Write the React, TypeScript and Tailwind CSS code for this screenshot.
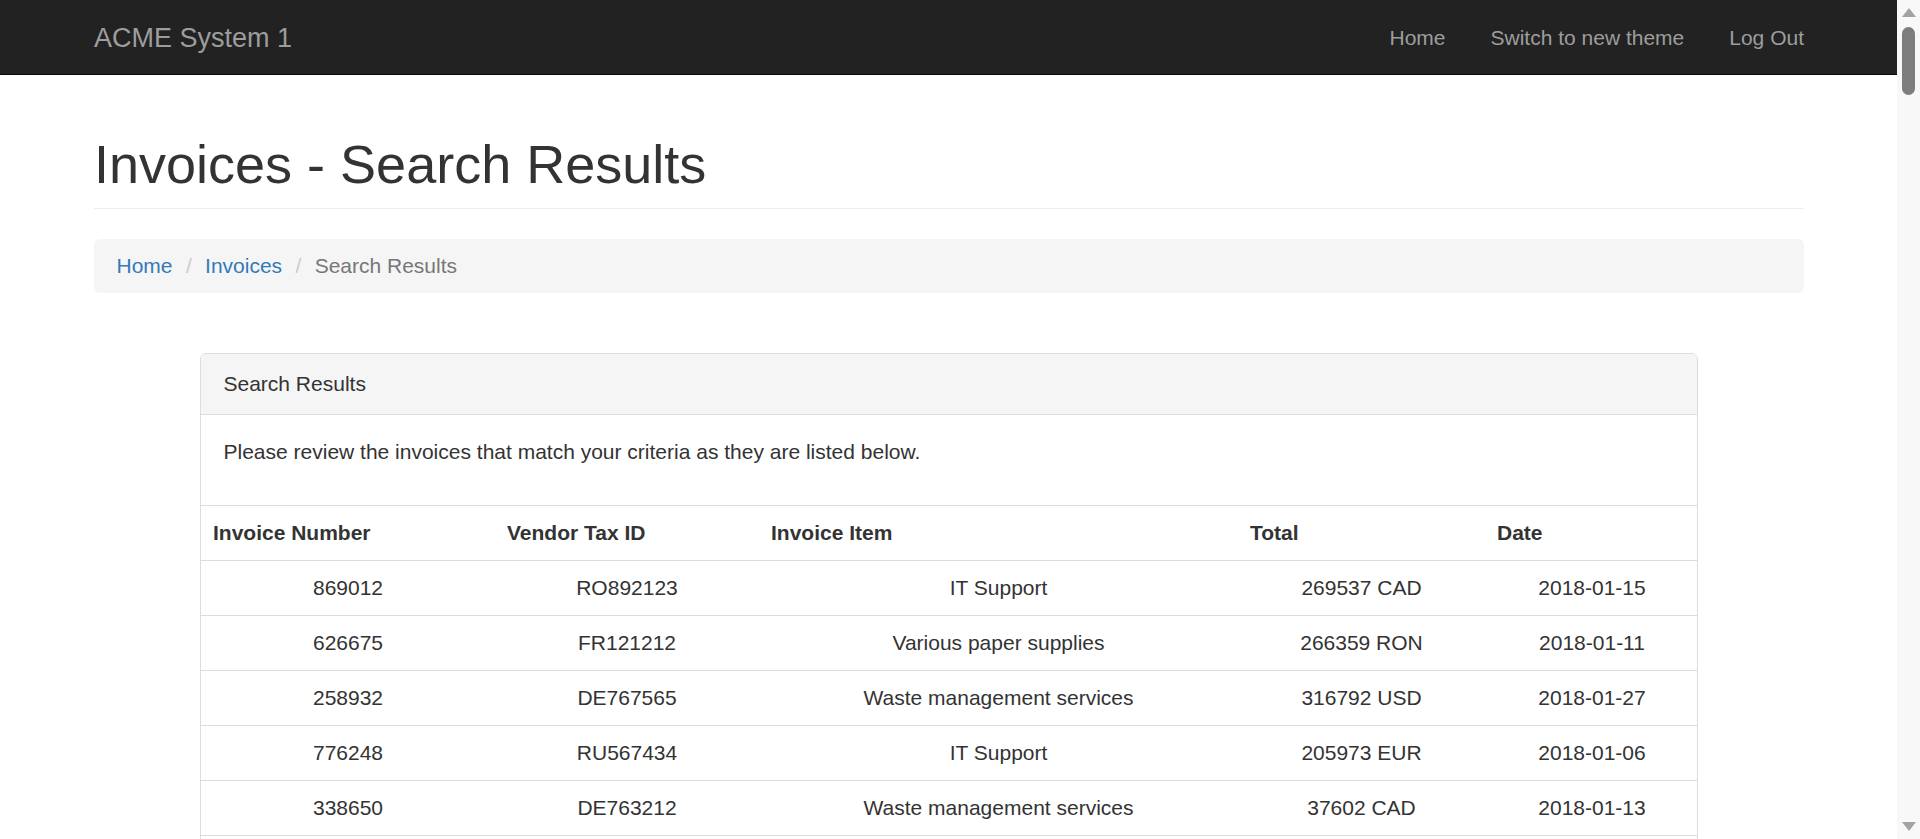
import React from 'react'

type Invoice = {
    number: string
    vendor: string
    item: string
    total: string
    date: string
}

const firstRows: Invoice[] = [
    { number: '869012', vendor: 'RO892123', item: 'IT Support', total: '269537 CAD', date: '2018-01-15' },
    { number: '626675', vendor: 'FR121212', item: 'Various paper supplies', total: '266359 RON', date: '2018-01-11' },
    { number: '258932', vendor: 'DE767565', item: 'Waste management services', total: '316792 USD', date: '2018-01-27' },
    { number: '776248', vendor: 'RU567434', item: 'IT Support', total: '205973 EUR', date: '2018-01-06' },
    { number: '338650', vendor: 'DE763212', item: 'Waste management services', total: '37602 CAD', date: '2018-01-13' },
]

const vendors = ['RO892123', 'FR121212', 'DE767565', 'RU567434', 'DE763212']
const items = ['IT Support', 'Various paper supplies', 'Waste management services']
const currencies = ['CAD', 'RON', 'USD', 'EUR']

// fills the rest of the long result list with stable, made-up invoices
function buildRows(count: number): Invoice[] {
    let seed = 12345
    const rand = () => {
        seed = (seed * 1103515245 + 12345) % 2147483648
        return seed / 2147483648
    }
    const rows = [...firstRows]
    while (rows.length < count) {
        const day = String(1 + Math.floor(rand() * 28)).padStart(2, '0')
        rows.push({
            number: String(100000 + Math.floor(rand() * 899999)),
            vendor: vendors[Math.floor(rand() * vendors.length)],
            item: items[Math.floor(rand() * items.length)],
            total: `${10000 + Math.floor(rand() * 320000)} ${currencies[Math.floor(rand() * currencies.length)]}`,
            date: `2018-01-${day}`,
        })
    }
    return rows
}

const rows = buildRows(164)

const columns = [
    { label: 'Invoice Number', width: 'w-[294px]' },
    { label: 'Vendor Tax ID', width: 'w-[264px]' },
    { label: 'Invoice Item', width: 'w-[479px]' },
    { label: 'Total', width: 'w-[247px]' },
    { label: 'Date', width: 'w-[214px]' },
]

// the window's scrollbar as it shows in the screenshot
function ScrollBar(): JSX.Element {
    return (
        <div className="fixed top-0 right-0 w-[23px] h-screen bg-[#f8f8f8] flex flex-col items-center">
            <svg width="14" height="9" viewBox="0 0 14 9" className="mt-[8px]">
                <polygon points="7,0 14,9 0,9" fill="#a3a3a3" />
            </svg>
            <div className="mt-[10px] w-[13px] h-[68px] rounded-full bg-[#7d7d7d]" />
            <div className="flex-1" />
            <svg width="14" height="9" viewBox="0 0 14 9" className="mb-[8px]">
                <polygon points="0,0 14,0 7,9" fill="#a3a3a3" />
            </svg>
        </div>
    )
}

export default function App(): JSX.Element {
    return (
        <div className="min-h-screen bg-white text-[#333] font-['Liberation_Sans',Arial,sans-serif] text-[21px] leading-[30px]">
            <div className="mr-[23px]">
                <nav className="h-[75px] bg-[#222] border-b border-[#080808]">
                    <div className="ml-[94px] w-[1710px] h-full pt-[2px] flex items-center justify-between">
                        <a href="#" className="text-[27px] leading-[30px] text-[#9d9d9d]">
                            ACME System 1
                        </a>
                        <ul className="flex -mr-[22.5px]">
                            <li><a href="#" className="px-[22.5px] text-[#9d9d9d]">Home</a></li>
                            <li><a href="#" className="px-[22.5px] text-[#9d9d9d]">Switch to new theme</a></li>
                            <li><a href="#" className="px-[22.5px] text-[#9d9d9d]">Log Out</a></li>
                        </ul>
                    </div>
                </nav>

                <div className="ml-[94px] w-[1710px] pb-[30px]">
                    <h1 className="mt-[60px] text-[54px] leading-[59.4px] font-medium pb-[13.5px] border-b border-[#eee]">
                        Invoices - Search Results
                    </h1>

                    <ol className="mt-[30px] flex bg-[#f5f5f5] rounded-[6px] px-[22.5px] py-[12px] whitespace-pre">
                        <li><a href="#" className="text-[#337ab7]">Home</a> </li>
                        <li><span className="px-[7.5px] text-[#ccc]">/{'\u00a0'}</span><a href="#" className="text-[#337ab7]">Invoices</a> </li>
                        <li><span className="px-[7.5px] text-[#ccc]">/{'\u00a0'}</span><span className="text-[#777]">Search Results</span></li>
                    </ol>

                    <div className="mt-[60px] mx-auto w-[1498px] border border-[#ddd] rounded-[6px] overflow-hidden">
                        <div className="bg-[#f5f5f5] border-b border-[#ddd] px-[22.5px] py-[15px]">Search Results</div>
                        <div className="p-[22.5px]">
                            <p className="mb-[15px]">Please review the invoices that match your criteria as they are listed below.</p>
                        </div>
                        <table className="w-full border-collapse table-fixed border-t border-[#ddd]">
                            <thead>
                                <tr>
                                    {columns.map((c) => (
                                        <th key={c.label} className={`${c.width} p-[12px] text-left font-bold border-b border-[#ddd]`}>
                                            {c.label}
                                        </th>
                                    ))}
                                </tr>
                            </thead>
                            <tbody>
                                {rows.map((r, i) => (
                                    <tr key={i} className="border-t border-[#ddd] first:border-t-0 text-center">
                                        <td className="p-[12px]">{r.number}</td>
                                        <td className="p-[12px]">{r.vendor}</td>
                                        <td className="p-[12px]">{r.item}</td>
                                        <td className="p-[12px]">{r.total}</td>
                                        <td className="p-[12px]">{r.date}</td>
                                    </tr>
                                ))}
                            </tbody>
                        </table>
                    </div>
                </div>
            </div>
            <ScrollBar />
        </div>
    )
}
